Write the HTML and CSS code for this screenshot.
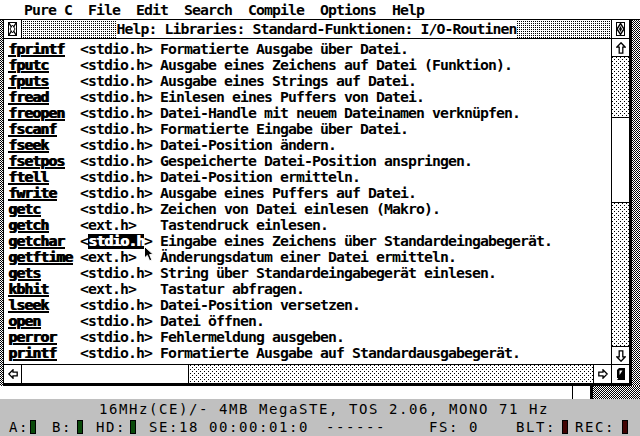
FILE: index.html
```html
<!DOCTYPE html>
<html lang="de">
<head>
<meta charset="utf-8">
<title>Pure C Help</title>
<link rel="stylesheet" href="styles.css">
</head>
<body>
<div class="screen">
  <div class="menubar atari">Pure C  File  Edit  Search  Compile  Options  Help</div>
  <div class="desk">
    <div class="window">
      <div class="titlebar">
        <div class="gadget closer">
          <svg width="9" height="14" viewBox="0 0 9 14"><rect x="0.5" y="0.5" width="8" height="13" fill="none" stroke="#000"/><path d="M1 1L8 13M8 1L1 13" stroke="#000" stroke-width="1.4"/><path d="M4.5 3L7 7L4.5 11L2 7Z" fill="#fff" stroke="#000"/></svg>
        </div>
        <div class="title pat-title"><span class="title-text atari">Help: Libraries: Standard-Funktionen: I/O-Routinen</span></div>
        <div class="gadget fuller">
          <svg width="9" height="14" viewBox="0 0 9 14"><rect x="0.5" y="0.5" width="8" height="13" fill="none" stroke="#000"/><path d="M4.5 1.5L8 7L4.5 12.5L1 7Z" fill="none" stroke="#000" stroke-width="1.4"/><path d="M4.5 4L6 7L4.5 10L3 7Z" fill="#000"/></svg>
        </div>
      </div>
      <div class="work">
        <div class="content atari">
<div class="row"><span class="fn">fprintf</span>  &lt;stdio.h&gt; Formatierte Ausgabe über Datei.</div>
<div class="row"><span class="fn">fputc</span>    &lt;stdio.h&gt; Ausgabe eines Zeichens auf Datei (Funktion).</div>
<div class="row"><span class="fn">fputs</span>    &lt;stdio.h&gt; Ausgabe eines Strings auf Datei.</div>
<div class="row"><span class="fn">fread</span>    &lt;stdio.h&gt; Einlesen eines Puffers von Datei.</div>
<div class="row"><span class="fn">freopen</span>  &lt;stdio.h&gt; Datei-Handle mit neuem Dateinamen verknüpfen.</div>
<div class="row"><span class="fn">fscanf</span>   &lt;stdio.h&gt; Formatierte Eingabe über Datei.</div>
<div class="row"><span class="fn">fseek</span>    &lt;stdio.h&gt; Datei-Position ändern.</div>
<div class="row"><span class="fn">fsetpos</span>  &lt;stdio.h&gt; Gespeicherte Datei-Position anspringen.</div>
<div class="row"><span class="fn">ftell</span>    &lt;stdio.h&gt; Datei-Position ermitteln.</div>
<div class="row"><span class="fn">fwrite</span>   &lt;stdio.h&gt; Ausgabe eines Puffers auf Datei.</div>
<div class="row"><span class="fn">getc</span>     &lt;stdio.h&gt; Zeichen von Datei einlesen (Makro).</div>
<div class="row"><span class="fn">getch</span>    &lt;ext.h&gt;   Tastendruck einlesen.</div>
<div class="row"><span class="fn">getchar</span>  &lt;<span class="sel">stdio.h</span>&gt; Eingabe eines Zeichens über Standardeingabegerät.</div>
<div class="row"><span class="fn">getftime</span> &lt;ext.h&gt;   Änderungsdatum einer Datei ermitteln.</div>
<div class="row"><span class="fn">gets</span>     &lt;stdio.h&gt; String über Standardeingabegerät einlesen.</div>
<div class="row"><span class="fn">kbhit</span>    &lt;ext.h&gt;   Tastatur abfragen.</div>
<div class="row"><span class="fn">lseek</span>    &lt;stdio.h&gt; Datei-Position versetzen.</div>
<div class="row"><span class="fn">open</span>     &lt;stdio.h&gt; Datei öffnen.</div>
<div class="row"><span class="fn">perror</span>   &lt;stdio.h&gt; Fehlermeldung ausgeben.</div>
<div class="row"><span class="fn">printf</span>   &lt;stdio.h&gt; Formatierte Ausgabe auf Standardausgabegerät.</div>
        </div>
        <div class="vscroll">
          <div class="gadget up">
            <svg width="10" height="12" viewBox="0 0 10 12"><path d="M5 0.8L9.2 5.2H6.8V11.2H3.2V5.2H0.8Z" fill="#fff" stroke="#000" stroke-width="1.3" stroke-linejoin="miter"/></svg>
          </div>
          <div class="vtrack pat-scroll"><div class="vslider"></div></div>
          <div class="gadget down">
            <svg width="10" height="12" viewBox="0 0 10 12"><path d="M5 11.2L9.2 6.8H6.8V0.8H3.2V6.8H0.8Z" fill="#fff" stroke="#000" stroke-width="1.3" stroke-linejoin="miter"/></svg>
          </div>
        </div>
      </div>
      <div class="hscroll">
        <div class="gadget left">
          <svg width="10" height="10" viewBox="0 0 10 10"><path d="M0.8 5L5 0.8V3.2H9.2V6.8H5V9.2Z" fill="#fff" stroke="#000" stroke-width="1.3"/></svg>
        </div>
        <div class="htrack pat-scroll"><div class="hslider"></div></div>
        <div class="gadget right">
          <svg width="10" height="10" viewBox="0 0 10 10"><path d="M9.2 5L5 0.8V3.2H0.8V6.8H5V9.2Z" fill="#fff" stroke="#000" stroke-width="1.3"/></svg>
        </div>
        <div class="gadget size">
          <svg width="8" height="12" viewBox="0 0 8 12"><path d="M8 0V12H0Z" fill="#000"/><path d="M2 0H8V2L2 10H0V2Z" fill="#000"/><path d="M2.5 2.5H5.5L2.5 7Z" fill="#fff"/></svg>
        </div>
      </div>
    </div>
  </div>
  <div class="lower">
    <div class="lw-main"></div>
    <div class="lw-scroll"></div>
    <div class="lw-border"></div>
    <div class="lw-desk pat-desk"></div>
  </div>
  <div class="status">
    <div class="st-line1">16MHz(CE)/- 4MB MegaSTE, TOS 2.06, MONO 71 Hz</div>
    <div class="st-line2">
      <span class="st st-a">A:</span><span class="led green led-a"></span>
      <span class="st st-b">B:</span><span class="led green led-b"></span>
      <span class="st st-hd">HD:</span><span class="led green led-hd"></span>
      <span class="st st-se">SE:18</span>
      <span class="st st-time">00:00:01:0</span>
      <span class="st st-dash">------</span>
      <span class="st st-fs">FS: 0</span>
      <span class="st st-blt">BLT:</span><span class="led red led-blt"></span>
      <span class="st st-rec">REC:</span><span class="led red led-rec"></span>
    </div>
  </div>
</div>
<svg class="cursor" width="11" height="17" viewBox="0 0 11 17"><path d="M0.5 0.5V12L3.3 9.4L5.6 14.8L7.8 13.9L5.6 8.6H9.3Z" fill="#000" stroke="#fff" stroke-width="1"/></svg>
</body>
</html>
```

FILE: styles.css
```css
* { box-sizing: border-box; margin: 0; padding: 0; }
html, body { width: 640px; height: 436px; overflow: hidden; background: #fff; }
body { position: relative; }

.screen { width: 640px; height: 436px; display: flex; flex-direction: column; }

.atari {
  font-family: "DejaVu Sans Mono", monospace;
  font-weight: bold;
  font-size: 14.8px;
  letter-spacing: -0.91px;
  line-height: 16px;
  color: #000;
}

.pat-desk {
  background: #fff url("data:image/svg+xml,%3Csvg xmlns='http://www.w3.org/2000/svg' width='2' height='2' shape-rendering='crispEdges'%3E%3Cpath d='M0 0h1v1H0zM1 1h1v1H1z'/%3E%3C/svg%3E") 0 0 / 2px 2px repeat;
}
.pat-title {
  background: #fff url("data:image/svg+xml,%3Csvg xmlns='http://www.w3.org/2000/svg' width='2' height='2' shape-rendering='crispEdges'%3E%3Cpath d='M1 1h1v1H1z'/%3E%3C/svg%3E") 0 0 / 2px 2px repeat;
}
.pat-scroll {
  background: #fff url("data:image/svg+xml,%3Csvg xmlns='http://www.w3.org/2000/svg' width='4' height='4' shape-rendering='crispEdges'%3E%3Cpath d='M0 0h1v1H0zM2 2h1v1H2z'/%3E%3C/svg%3E") 0 0 / 4px 4px repeat;
}

/* menu bar */
.menubar {
  height: 20px;
  border-bottom: 1px solid #000;
  padding: 2px 0 0 24px;
  background: #fff;
  white-space: pre;
}

/* desktop + window */
.desk {
  height: 366px;
  padding-left: 3px;
  background: #fff url("data:image/svg+xml,%3Csvg xmlns='http://www.w3.org/2000/svg' width='2' height='2' shape-rendering='crispEdges'%3E%3Cpath d='M0 0h1v1H0zM1 1h1v1H1z'/%3E%3C/svg%3E") 0 0 / 2px 2px repeat;
}
.window {
  width: 629px;
  height: 366px;
  background: #fff;
  border-left: 1px solid #000;
  border-right: 3px solid #000;
  border-bottom: 3px solid #000;
  display: flex;
  flex-direction: column;
}

.gadget {
  display: flex;
  align-items: center;
  justify-content: center;
  background: #fff;
}
.gadget svg { display: block; }

.titlebar {
  height: 19px;
  border-bottom: 1px solid #000;
  display: flex;
}
.closer { width: 18px; border-right: 1px solid #000; }
.fuller { width: 18px; border-left: 1px solid #000; }
.title {
  flex: 1;
  display: flex;
  justify-content: center;
  align-items: flex-start;
}
.title-text {
  background: #fff;
  height: 18px;
  padding: 1px 1px 0 1px;
  white-space: pre;
}

.work {
  height: 326px;
  border-bottom: 1px solid #000;
  display: flex;
}
.content {
  flex: 1;
  padding: 2px 0 0 4px;
  overflow: hidden;
}
.row { height: 16px; white-space: pre; }
.fn {
  text-decoration: underline;
  text-decoration-thickness: 2px;
  text-underline-offset: 1px;
  text-shadow: 1px 0 0 #000;
}
.sel {
  display: inline-block;
  background: #000;
  color: #fff;
  height: 15px;
  line-height: 14px;
  vertical-align: top;
  margin-top: 1px;
  text-shadow: 1px 0 0 #fff;
}

.vscroll {
  width: 18px;
  border-left: 1px solid #000;
  display: flex;
  flex-direction: column;
}
.up { height: 18px; border-bottom: 1px solid #000; }
.down { height: 18px; border-top: 1px solid #000; }
.vtrack { flex: 1; padding-top: 60px; }
.vslider {
  height: 86px;
  background: #fff;
  border-top: 1px solid #000;
  border-bottom: 1px solid #000;
}

.hscroll {
  height: 18px;
  display: flex;
}
.left { width: 18px; border-right: 1px solid #000; }
.htrack { flex: 1; }
.hslider {
  width: 167px;
  height: 100%;
  background: #fff;
  border-right: 1px solid #000;
}
.right { width: 18px; border-left: 1px solid #000; }
.size { width: 18px; border-left: 1px solid #000; }

/* window behind */
.lower {
  height: 13px;
  display: flex;
}
.lw-main { width: 572px; background: #fff; }
.lw-scroll { width: 18px; border-left: 1px solid #000; background: #fff; }
.lw-border { width: 3px; background: #000; }
.lw-desk { flex: 1; }

/* emulator status bar */
.status {
  height: 37px;
  background: #c0c0c0;
  font-family: "DejaVu Sans Mono", monospace;
  font-size: 14px;
  letter-spacing: 1.57px;
  color: #000;
  padding-top: 2px;
}
.st-line1 { height: 18px; line-height: 16px; padding-left: 99px; white-space: pre; }
.st-line2 { height: 16px; line-height: 16px; display: flex; align-items: flex-start; }
.st { display: block; white-space: pre; }
.led {
  display: block;
  width: 6px;
  height: 14px;
  margin-top: 1px;
  border: 1px solid #000;
}
.green { background: #0a4a0a; }
.red { background: #420404; }
.st-a { margin-left: 9px; }
.led-a { margin-left: 1px; }
.st-b { margin-left: 16px; }
.led-b { margin-left: 5px; }
.st-hd { margin-left: 13px; }
.led-hd { margin-left: 4px; }
.st-se { margin-left: 13px; }
.st-time { margin-left: 10px; }
.st-dash { margin-left: 17px; }
.st-fs { margin-left: 43px; }
.st-blt { margin-left: 37px; }
.led-blt { margin-left: 6px; }
.st-rec { margin-left: 7px; }
.led-rec { margin-left: 7px; }

/* mouse pointer overlay */
.cursor {
  position: absolute;
  left: 144px;
  top: 246px;
}
```
